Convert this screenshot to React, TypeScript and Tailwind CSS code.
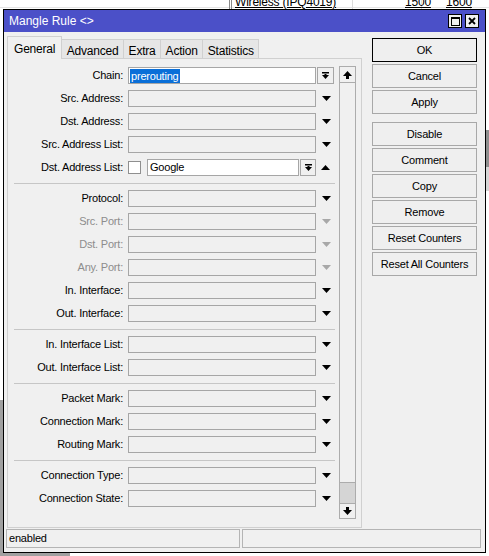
import React from "react";

type Row = { label: string; kind?: "chain" | "list" | "plain"; dim?: boolean };

const groups: Row[][] = [
  [
    { label: "Chain:", kind: "chain" },
    { label: "Src. Address:" },
    { label: "Dst. Address:" },
    { label: "Src. Address List:" },
    { label: "Dst. Address List:", kind: "list" },
  ],
  [
    { label: "Protocol:" },
    { label: "Src. Port:", dim: true },
    { label: "Dst. Port:", dim: true },
    { label: "Any. Port:", dim: true },
    { label: "In. Interface:" },
    { label: "Out. Interface:" },
  ],
  [{ label: "In. Interface List:" }, { label: "Out. Interface List:" }],
  [{ label: "Packet Mark:" }, { label: "Connection Mark:" }, { label: "Routing Mark:" }],
  [{ label: "Connection Type:" }, { label: "Connection State:" }],
];

const tabs = ["General", "Advanced", "Extra", "Action", "Statistics"];

const buttons = [
  ["OK", "Cancel", "Apply"],
  ["Disable", "Comment", "Copy", "Remove", "Reset Counters", "Reset All Counters"],
];

function Down({ dim }: { dim?: boolean }) {
  return (
    <svg width="9" height="5" viewBox="0 0 9 5">
      <polygon points="0,0 9,0 4.5,5" fill={dim ? "#a8a8a8" : "#000"} />
    </svg>
  );
}

function Up() {
  return (
    <svg width="9" height="5" viewBox="0 0 9 5">
      <polygon points="0,5 9,5 4.5,0" fill="#000" />
    </svg>
  );
}

function BarDown() {
  return (
    <svg width="9" height="8" viewBox="0 0 9 8">
      <rect x="1" y="0" width="7" height="1.5" fill="#000" />
      <polygon points="1,3 8,3 4.5,7" fill="#000" />
      <rect x="3.5" y="2" width="2" height="2" fill="#000" />
    </svg>
  );
}

function ScrollArrow({ up }: { up?: boolean }) {
  return (
    <svg width="9" height="8" viewBox="0 0 9 8" className={up ? "" : "rotate-180"}>
      <polygon points="4.5,0 9,5 0,5" fill="#000" />
      <rect x="3" y="5" width="3" height="3" fill="#000" />
    </svg>
  );
}

function FormRow({ row }: { row: Row }) {
  return (
    <div className="flex h-[23px] items-center">
      <div
        className={`w-[116px] shrink-0 text-right pr-[1px] ${row.dim ? "text-[#8d8d8d]" : "text-black"}`}
      >
        {row.label}
      </div>
      <div className="ml-[4px] flex items-center">
        {row.kind === "list" ? (
          <>
            <div className="w-[13px] h-[13px] border border-[#8f8f8f] bg-white" />
            <div className="ml-[6px] w-[152px] h-[17px] border border-[#a6a6a6] bg-white flex items-center pl-[2px]">
              Google
            </div>
            <div className="ml-[1px] w-[16px] h-[17px] border border-[#a6a6a6] flex items-center justify-center">
              <BarDown />
            </div>
            <div className="w-[19px] flex justify-center">
              <Up />
            </div>
          </>
        ) : row.kind === "chain" ? (
          <>
            <div className="w-[188px] h-[17px] border border-[#a6a6a6] bg-white flex items-center pl-[1px]">
              <span className="bg-[#0a6fd8] text-white leading-[14px] px-[1px]">prerouting</span>
            </div>
            <div className="ml-[1px] w-[17px] h-[17px] border border-[#a6a6a6] flex items-center justify-center">
              <BarDown />
            </div>
          </>
        ) : (
          <>
            <div className="w-[188px] h-[17px] border border-[#a6a6a6] bg-[#f0f0f0]" />
            <div className="w-[20px] flex justify-center pl-[1px]">
              <Down dim={row.dim} />
            </div>
          </>
        )}
      </div>
    </div>
  );
}

export default function App() {
  return (
    <div className="relative w-[489px] h-[556px] overflow-hidden bg-white font-['Liberation_Sans',Arial,sans-serif] text-[11px] tracking-[-0.2px] text-black">
      {/* table behind the window */}
      <div className="absolute left-0 top-[7px] w-[489px] h-px bg-[#e4e4e4]" />
      <div className="absolute left-[229px] top-0 w-px h-[10px] bg-[#8a8a8a]" />
      <div className="absolute left-[231px] top-0 w-px h-[10px] bg-[#8a8a8a]" />
      <div className="absolute left-[352px] top-0 w-px h-[10px] bg-[#dcdcdc]" />
      <div className="absolute left-[421px] top-0 w-px h-[10px] bg-[#dcdcdc]" />
      <div className="absolute left-[470px] top-0 w-px h-[10px] bg-[#dcdcdc]" />
      <div className="absolute left-[235px] top-[-4px] text-[12px] leading-[13px] underline">Wireless (IPQ4019)</div>
      <div className="absolute left-[405px] top-[-4px] text-[12px] leading-[13px] underline">1500</div>
      <div className="absolute left-[446px] top-[-4px] text-[12px] leading-[13px] underline">1600</div>
      <div className="absolute left-[486px] top-[130px] w-[3px] h-[37px] bg-[#8f8f8f]" />
      <div className="absolute left-[486px] top-[167px] w-[3px] h-[24px] bg-[#d6d6d6]" />
      <div className="absolute left-0 top-[553px] w-[70px] h-[3px] bg-[#a0a0a0]" />
      <div className="absolute left-0 top-[400px] w-[3px] h-[156px] bg-[#a0a0a0]" />

      {/* window */}
      <div className="absolute left-[3px] top-[9px] w-[483px] h-[544px] border border-black bg-[#f0f0f0] flex flex-col">
        <div className="h-[22px] bg-[#4b50c8] flex items-center pl-[5px] pr-[6px]">
          <span className="text-white text-[12px] tracking-normal">Mangle Rule &lt;&gt;</span>
          <div className="ml-auto flex gap-[3px]">
            <div className="w-[14px] h-[14px] border border-black bg-[#f0f0f0] flex items-center justify-center">
              <div className="w-[9px] h-[9px] border border-black border-t-2" />
            </div>
            <div className="w-[14px] h-[14px] border border-black bg-[#f0f0f0] flex items-center justify-center">
              <svg width="8" height="8" viewBox="0 0 8 8">
                <path d="M1 1 L7 7 M7 1 L1 7" stroke="#000" strokeWidth="1.8" />
              </svg>
            </div>
          </div>
        </div>

        <div className="flex pl-[3px] pt-[4px]">
          <div className="w-[355px] flex flex-col">
            <div className="flex items-end h-[22px]">
              {tabs.map((t, i) => (
                <div
                  key={t}
                  className={
                    i === 0
                      ? "h-[23px] -mb-px z-10 px-[6px] pt-[3px] border border-b-0 border-[#d0d0d0] bg-[#f0f0f0] text-[12px]"
                      : "h-[19px] px-[4.5px] pt-[2px] border border-l-0 border-b-0 border-[#d0d0d0] bg-[#e6e6e6] text-[12px]"
                  }
                >
                  {t}
                </div>
              ))}
            </div>
            <div className="h-[470px] border border-[#d0d0d0] flex">
              <div className="w-[331px] pt-[5px]">
                {groups.map((g, gi) => (
                  <div key={gi}>
                    {gi > 0 && (
                      <div className="h-[8px] pt-[4px]">
                        <div className="ml-[6px] w-[321px] h-px bg-[#c6c6c6]" />
                      </div>
                    )}
                    {g.map((r) => (
                      <FormRow key={r.label} row={r} />
                    ))}
                  </div>
                ))}
              </div>
              <div className="mt-[7px] w-[17px] h-[453px] border border-[#acacac] flex flex-col">
                <div className="h-[16px] border-b border-[#acacac] flex items-center justify-center">
                  <ScrollArrow up />
                </div>
                <div className="flex-1" />
                <div className="h-[21px] bg-[#d5d5d5] border-t border-[#acacac]" />
                <div className="h-[15px] border-t border-[#acacac] flex items-center justify-center">
                  <ScrollArrow />
                </div>
              </div>
            </div>
          </div>

          <div className="ml-[10px] mt-[2px] w-[105px] flex flex-col gap-[8px]">
            {buttons.map((set, si) => (
              <div key={si} className="flex flex-col gap-[2px]">
                {set.map((b) => (
                  <div
                    key={b}
                    className={`h-[24px] flex items-center justify-center border bg-[#efefef] ${
                      b === "OK" ? "border-black" : "border-[#a8a8a8]"
                    }`}
                  >
                    {b}
                  </div>
                ))}
              </div>
            ))}
          </div>
        </div>

        <div className="flex gap-[2px] pl-[2px] mt-[1px]">
          <div className="w-[234px] h-[19px] border border-[#b4b4b4] flex items-center pl-[2px]">enabled</div>
          <div className="w-[239px] h-[19px] border border-[#b4b4b4]" />
        </div>
      </div>
    </div>
  );
}
